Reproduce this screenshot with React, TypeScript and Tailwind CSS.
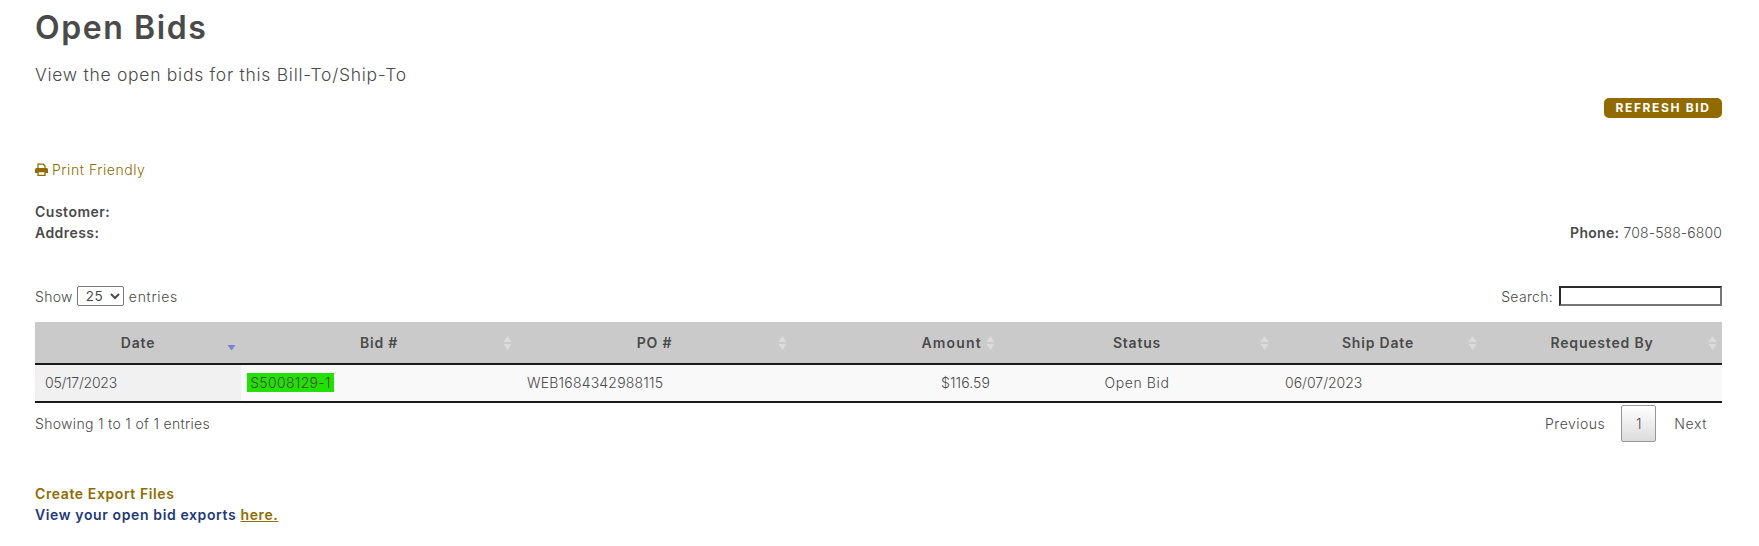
import React from "react";

function Sort({ active }: { active?: boolean }) {
  return (
    <svg className="absolute right-[5px] top-[13px]" width="9" height="16" viewBox="0 0 9 16">
      {active ? (
        <path d="M0.5 10 H8.5 L4.5 15.5 Z" fill="#7b7fd6" />
      ) : (
        <>
          <path d="M0.5 7 H8.5 L4.5 1 Z" fill="#dcdcdc" />
          <path d="M0.5 9 H8.5 L4.5 15 Z" fill="#dcdcdc" />
        </>
      )}
    </svg>
  );
}

const heads: { t: string; cls: string; active?: boolean }[] = [
  { t: "Date", cls: "text-center", active: true },
  { t: "Bid #", cls: "text-center" },
  { t: "PO #", cls: "text-center" },
  { t: "Amount", cls: "text-right pr-[18px] tracking-[1.2px]" },
  { t: "Status", cls: "text-center" },
  { t: "Ship Date", cls: "text-center" },
  { t: "Requested By", cls: "text-center" },
];

export default function App() {
  return (
    <div className="h-[546px] overflow-hidden bg-white pl-[35px] pr-[37px] text-[14px] text-[#4a4a4a] font-['Inter',sans-serif] tracking-[0.32px]">
      <h1 className="pt-[10px] text-[32px] leading-[36px] font-semibold tracking-[1.6px]">Open Bids</h1>
      <p className="mt-[17px] text-[17.5px] leading-[24px] font-light tracking-[0.72px]">
        View the open bids for this Bill-To/Ship-To
      </p>
      <div className="mt-[11px] flex justify-end">
        <button className="flex h-[20px] w-[118px] items-center justify-center rounded-[5px] bg-[#916b00] text-[12px] font-bold tracking-[1.65px] text-white">
          REFRESH BID
        </button>
      </div>
      <a className="mt-[41px] flex h-[20px] items-center text-[14px] font-light tracking-[0.55px] text-[#916b00]">
        <svg width="13" height="13" viewBox="0 0 13 13" className="mr-[4px]">
          <path d="M3 6V1.2h5.2L10 3v3" fill="none" stroke="#916b00" strokeWidth="1.3" />
          <path d="M0 6.5Q0 5 1.5 5h10Q13 5 13 6.5V10H10V8H3v2H0z" fill="#916b00" />
          <path d="M3 8.5h7v3.8H3z" fill="none" stroke="#916b00" strokeWidth="1.3" />
        </svg>
        Print Friendly
      </a>
      <div className="mt-[22px] font-semibold leading-[21px] tracking-[0.5px]">Customer:</div>
      <div className="flex justify-between leading-[21px]">
        <span className="font-semibold tracking-[0.45px]">Address:</span>
        <span>
          <b className="font-semibold tracking-[0.3px]">Phone:</b>{" "}
          <span className="font-light tracking-[0.1px]">708-588-6800</span>
        </span>
      </div>
      <div className="mt-[41px] flex h-[24px] items-center justify-between font-light">
        <label className="flex items-center">
          Show
          <select className="mr-[5px] ml-[4px] h-[20px] w-[47px] rounded-[2px] border border-[#767676] bg-white pl-[4px] text-[13.5px] font-normal">
            <option>25</option>
          </select>
          <span className="tracking-[0.7px]">entries</span>
        </label>
        <label className="flex items-center">
          Search:
          <input className="ml-[6px] h-[20px] w-[163px] border-2 border-t-[#2b2b2b] border-l-[#2b2b2b] border-r-[#767676] border-b-[#767676] bg-white" />
        </label>
      </div>
      <table className="mt-[14px] w-full table-fixed border-collapse">
        <colgroup>
          <col className="w-[206px]" />
          <col className="w-[276px]" />
          <col className="w-[275px]" />
          <col className="w-[208px]" />
          <col className="w-[274px]" />
          <col className="w-[208px]" />
          <col />
        </colgroup>
        <thead>
          <tr className="h-[42px] border-b-2 border-[#1a1a1a] bg-[#cacaca]">
            {heads.map((h) => (
              <th key={h.t} className={`relative font-semibold tracking-[0.8px] ${h.cls}`}>
                {h.t}
                <Sort active={h.active} />
              </th>
            ))}
          </tr>
        </thead>
        <tbody>
          <tr className="h-[38px] border-b-2 border-[#1a1a1a] bg-[#f9f9f9] font-light [&>td]:pb-[2px]">
            <td className="bg-[#f1f1f1] pl-[10px] tracking-[-0.25px]">05/17/2023</td>
            <td className="pl-[6px]">
              <span className="inline-block h-[19px] w-[87px] bg-[#22e000] text-center leading-[19px]">S5008129-1</span>
            </td>
            <td className="pl-[10px] tracking-[0.2px]">WEB1684342988115</td>
            <td className="pr-[10px] text-right tracking-[0.1px]">$116.59</td>
            <td className="text-center tracking-[0.6px]">Open Bid</td>
            <td className="pl-[11px] tracking-[0]">06/07/2023</td>
            <td />
          </tr>
        </tbody>
      </table>
      <div className="mt-[1px] flex h-[38px] items-center justify-between font-light">
        <span>Showing 1 to 1 of 1 entries</span>
        <div className="flex items-center">
          <span className="tracking-[0.5px]">Previous</span>
          <span className="mr-[18px] ml-[16px] flex h-[37px] w-[35px] items-center justify-center rounded-[2px] border border-[#979797] bg-gradient-to-b from-white to-[#dcdcdc]">
            1
          </span>
          <span className="mr-[15px] tracking-[0.6px]">Next</span>
        </div>
      </div>
      <div className="mt-[41px] font-semibold leading-[21px] tracking-[0.6px] text-[#916b00]">Create Export Files</div>
      <div className="font-semibold leading-[21px] tracking-[0.62px] text-[#1f3a7a]">
        View your open bid exports <a className="text-[#916b00] underline">here.</a>
      </div>
    </div>
  );
}
